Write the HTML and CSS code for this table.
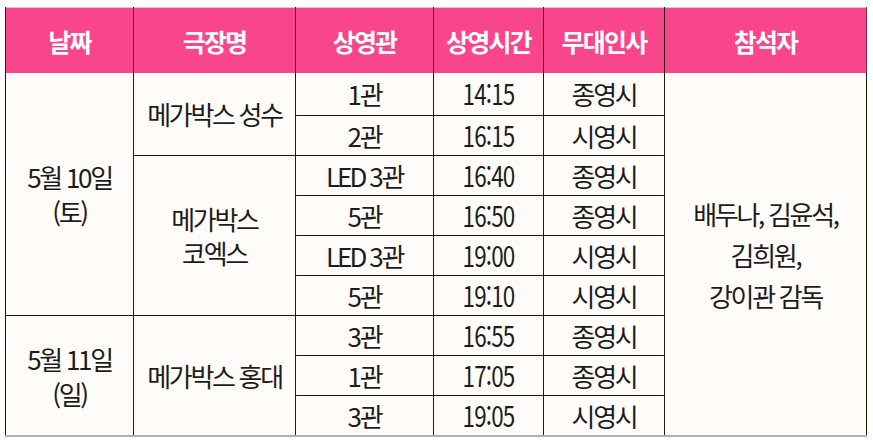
FILE: index.html
```html
<!DOCTYPE html>
<html lang="ko">
<head>
<meta charset="utf-8">
<title>무대인사 일정</title>
<link rel="stylesheet" href="styles.css">
</head>
<body>
<div class="wrap">
<table class="schedule">
  <colgroup>
    <col class="c-date"><col class="c-theater"><col class="c-screen"><col class="c-time"><col class="c-kind"><col class="c-guest">
  </colgroup>
  <thead>
    <tr>
      <th>날짜</th><th>극장명</th><th>상영관</th><th>상영시간</th><th>무대인사</th><th>참석자</th>
    </tr>
  </thead>
  <tbody>
    <tr class="first">
      <td rowspan="6" class="date">5월 10일<br>(토)</td>
      <td rowspan="2" class="theater">메가박스 성수</td>
      <td>1관</td><td class="time"><span class="num">14:15</span></td><td>종영시</td>
      <td rowspan="9" class="guest">배두나, 김윤석,<br>김희원,<br>강이관 감독</td>
    </tr>
    <tr><td>2관</td><td class="time"><span class="num">16:15</span></td><td>시영시</td></tr>
    <tr>
      <td rowspan="4" class="theater two">메가박스<br>코엑스</td>
      <td><span class="led">LED</span> 3관</td><td class="time"><span class="num">16:40</span></td><td>종영시</td>
    </tr>
    <tr><td>5관</td><td class="time"><span class="num">16:50</span></td><td>종영시</td></tr>
    <tr><td><span class="led">LED</span> 3관</td><td class="time"><span class="num">19:00</span></td><td>시영시</td></tr>
    <tr><td>5관</td><td class="time"><span class="num">19:10</span></td><td>시영시</td></tr>
    <tr>
      <td rowspan="3" class="date">5월 11일<br>(일)</td>
      <td rowspan="3" class="theater">메가박스 홍대</td>
      <td>3관</td><td class="time"><span class="num">16:55</span></td><td>종영시</td>
    </tr>
    <tr><td>1관</td><td class="time"><span class="num">17:05</span></td><td>종영시</td></tr>
    <tr class="last"><td>3관</td><td class="time"><span class="num">19:05</span></td><td>시영시</td></tr>
  </tbody>
</table>
</div>
</body>
</html>
```
FILE: styles.css
```css
html, body {
  margin: 0;
  padding: 0;
  background: #ffffff;
}
.wrap {
  padding: 7px 7px 0 5px;
}
.schedule {
  width: 861px;
  table-layout: fixed;
  border-collapse: collapse;
  border-top: 1px solid #d9c9cf;
  border-bottom: 2px solid #b3b0ae;
  font-family: "Noto Sans CJK KR", "Noto Sans", sans-serif;
  color: #1c1c1c;
}
.c-date { width: 128px; }
.c-theater { width: 162px; }
.c-screen { width: 138px; }
.c-time { width: 110px; }
.c-kind { width: 121px; }
.c-guest { width: 202px; }

.schedule th {
  height: 65px;
  padding: 0;
  background: #f8458b;
  color: #fff;
  font-size: 25px;
  font-weight: 700;
  letter-spacing: -1.8px;
  text-align: center;
  vertical-align: middle;
  border-left: 1px solid #2a1a14;
  border-right: 1px solid #2a1a14;
}
.schedule th:last-child {
  border-right-color: #7a2a4a;
}
.schedule td {
  height: 39px;
  padding: 0;
  background: #fffcfa;
  font-size: 26px;
  font-weight: 400;
  letter-spacing: -2.3px;
  line-height: 1.2;
  text-align: center;
  vertical-align: middle;
  border: 1px solid #24180f;
}
.schedule tr.first td { height: 42px; border-top: none; }
.schedule tr.last td { border-bottom: none; }
.schedule td.date { border-bottom: 1px solid #24180f; }
.schedule .led {
  letter-spacing: -3px;
}
.schedule td.time {
  font-size: 28px;
  letter-spacing: -1px;
}
.schedule .num {
  display: inline-block;
  transform: scaleX(0.8);
}
.schedule td.date {
  line-height: 35px;
}
.schedule td.theater.two {
  line-height: 34px;
}
.schedule td.guest {
  line-height: 41px;
}
```
